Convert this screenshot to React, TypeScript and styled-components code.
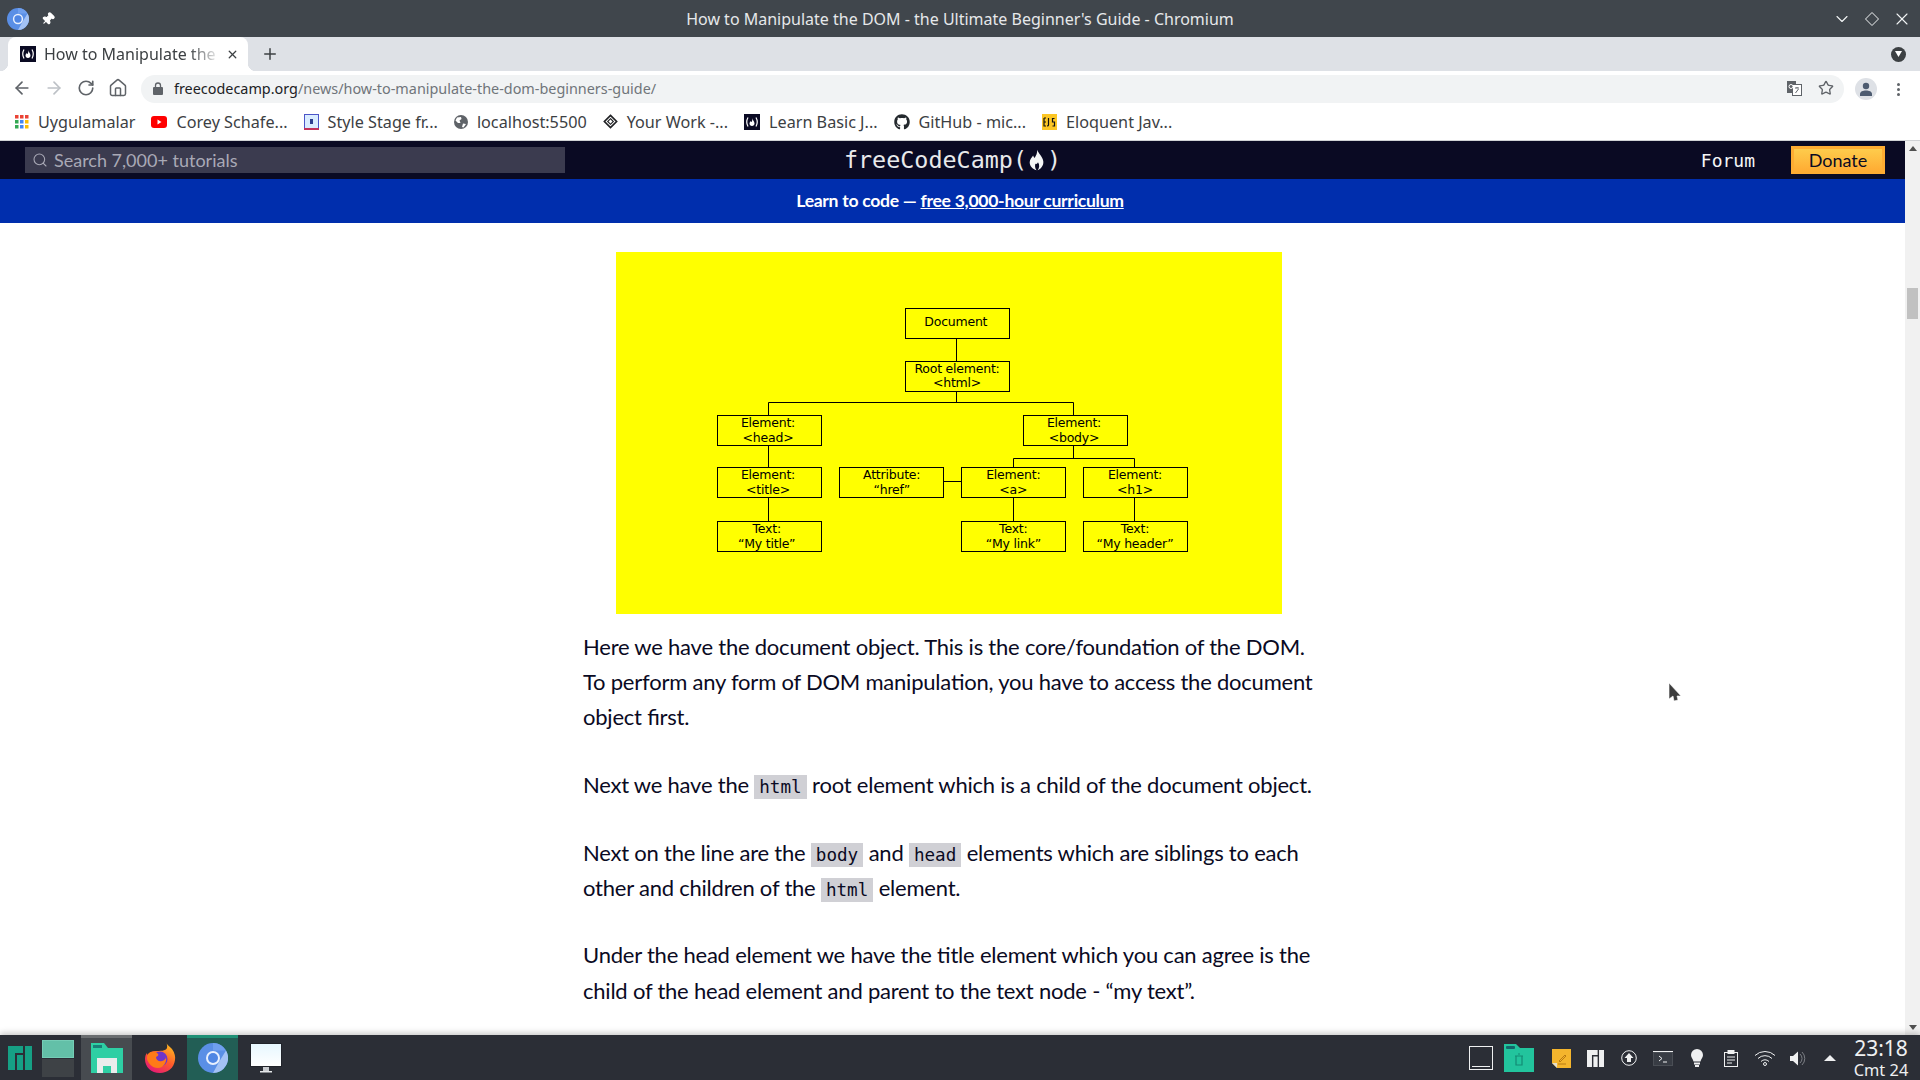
import styled, { createGlobalStyle } from "styled-components";
import { ArrowLeft, ArrowRight, ChevronDown, Home, Pin, Plus, RotateCw, Search, Star, X } from "lucide-react";
import { FaGithub } from "react-icons/fa";

const GlobalStyle = createGlobalStyle`
  html, body { margin: 0; height: 100%; overflow: hidden; background: #fff; }
  * { box-sizing: border-box; }
`;

const Screen = styled.div`
  height: 100vh;
  display: flex;
  flex-direction: column;
  font-family: "Noto Sans", sans-serif;
  position: relative;
`;

/* window title */
const TitleBar = styled.div`
  height: 37px;
  flex: none;
  background: #40464c;
  display: grid;
  grid-template-columns: 1fr auto 1fr;
  align-items: center;
  color: #e6e8ea;
  font-size: 16px;
`;
const TitleLeft = styled.div`
  display: flex;
  align-items: center;
  gap: 12px;
  padding-left: 7px;
`;
const TitleRight = styled.div`
  display: flex;
  justify-content: flex-end;
  align-items: center;
  gap: 10px;
  padding-right: 8px;
  color: #f2f4f5;
`;

/* tabs */
const TabStrip = styled.div`
  height: 34px;
  flex: none;
  background: #dee1e6;
  display: flex;
  align-items: center;
  padding-left: 8px;
  padding-right: 14px;
`;
const Tab = styled.div`
  position: relative;
  width: 240px;
  height: 34px;
  background: #fff;
  border-radius: 8px 8px 0 0;
  display: flex;
  align-items: center;
  padding: 0 12px;
  color: #3c4043;
  font-size: 16px;
  &::before, &::after {
    content: "";
    position: absolute;
    bottom: 0;
    width: 8px;
    height: 8px;
  }
  &::before { left: -8px; background: radial-gradient(circle at 0 0, #dee1e6 8px, #fff 8.5px); }
  &::after { right: -8px; background: radial-gradient(circle at 100% 0, #dee1e6 8px, #fff 8.5px); }
`;
const TabLabel = styled.span`
  margin-left: 8px;
  white-space: nowrap;
  -webkit-mask-image: linear-gradient(to right, #000 84%, rgba(0, 0, 0, 0.15) 100%);
  mask-image: linear-gradient(to right, #000 84%, rgba(0, 0, 0, 0.15) 100%);
`;
const TabClose = styled.div`
  margin-left: auto;
  margin-right: -3px;
  display: flex;
`;
const NewTab = styled.div`
  margin-left: 13px;
  display: flex;
  color: #3c4043;
`;
const TabMenu = styled.div`
  margin-left: auto;
  width: 15px;
  height: 15px;
  border-radius: 50%;
  background: #3c4043;
  display: flex;
  align-items: center;
  justify-content: center;
`;

/* address bar */
const Toolbar = styled.div`
  height: 32px;
  flex: none;
  background: #fff;
  display: flex;
  align-items: flex-end;
  padding-left: 6px;
`;
const NavButton = styled.div<{ $off?: boolean }>`
  width: 32px;
  height: 28px;
  padding-bottom: 2px;
  display: flex;
  align-items: center;
  justify-content: center;
  color: ${props => (props.$off ? "#bdc1c6" : "#5f6368")};
`;
const Omnibox = styled.div`
  width: 1703px;
  height: 28px;
  margin-left: 7px;
  padding: 0 10px 2px 12px;
  border-radius: 14px;
  background: #f1f3f4;
  display: flex;
  align-items: center;
  font-size: 14.4px;
  color: #70757a;
  gap: 11px;
`;
const Host = styled.span`
  color: #202124;
`;
const OmniRight = styled.div`
  margin-left: auto;
  display: flex;
  align-items: center;
  gap: 16px;
  color: #5f6368;
`;
const Avatar = styled.div`
  width: 22px;
  height: 22px;
  margin: 0 0 3px 11px;
  border-radius: 50%;
  background: #dee1e6;
  display: flex;
  align-items: center;
  justify-content: center;
`;
const Kebab = styled.div`
  margin: 0 0 7px 20px;
  display: flex;
  flex-direction: column;
  gap: 2px;
  i { width: 3px; height: 3px; border-radius: 50%; background: #5f6368; display: block; }
`;

/* bookmarks */
const BookmarkBar = styled.div`
  height: 38px;
  flex: none;
  background: #fff;
  border-bottom: 1px solid #d0d2d5;
  display: flex;
  align-items: center;
  padding-left: 15px;
  gap: 16px;
`;
const Bookmark = styled.div`
  display: flex;
  align-items: center;
  gap: 9px;
  font-size: 16.2px;
  color: #3c4043;
  white-space: nowrap;
`;

/* browser viewport */
const Viewport = styled.div`
  flex: 1;
  min-height: 0;
  display: flex;
  overflow: hidden;
`;
const Page = styled.div`
  flex: 1;
  min-width: 0;
  overflow: hidden;
  font-family: Lato, sans-serif;
  color: #0a0a23;
`;
const ScrollTrack = styled.div`
  width: 15px;
  flex: none;
  background: #f1f1f1;
  display: flex;
  flex-direction: column;
  align-items: center;
  justify-content: space-between;
  padding: 5px 0;
  position: relative;
`;
const ScrollThumb = styled.div`
  position: absolute;
  top: 147px;
  left: 2px;
  width: 11px;
  height: 31px;
  background: #c1c1c1;
`;
const ScrollArrow = styled.div<{ $down?: boolean }>`
  width: 0;
  height: 0;
  border-left: 4px solid transparent;
  border-right: 4px solid transparent;
  ${props => (props.$down ? "border-top: 5px solid #505050;" : "border-bottom: 5px solid #505050;")}
`;

const SiteHeader = styled.header`
  height: 38px;
  background: #0a0a23;
  display: grid;
  grid-template-columns: 1fr auto 1fr;
  align-items: center;
  color: #f5f6f7;
`;
const SearchBox = styled.div`
  margin-left: 25px;
  width: 540px;
  height: 26px;
  background: #3b3b4f;
  display: flex;
  align-items: center;
  gap: 6px;
  padding-left: 7px;
  color: #a9a9b6;
  font-size: 18px;
`;
const Logo = styled.div`
  display: flex;
  align-items: center;
  gap: 1.5px;
  font-family: "DejaVu Sans Mono", monospace;
  font-size: 23.4px;
  color: #e8e9eb;
`;
const HeaderRight = styled.div`
  display: flex;
  justify-content: flex-end;
  align-items: center;
  gap: 36px;
  padding-right: 20px;
`;
const ForumLink = styled.span`
  font-family: "DejaVu Sans Mono", monospace;
  font-size: 18px;
`;
const Donate = styled.span`
  width: 94px;
  height: 28px;
  border: 3px solid #feac32;
  background: linear-gradient(#fecc4c, #ffac33);
  color: #0a0a23;
  font-size: 18px;
  display: flex;
  align-items: center;
  justify-content: center;
`;
const Banner = styled.div`
  height: 44px;
  padding: 0 0 2px 15px;
  background: #002ead;
  color: #fff;
  font-weight: 700;
  font-size: 17.6px;
  letter-spacing: -0.3px;
  display: flex;
  align-items: center;
  justify-content: center;
  gap: 4px;
  a { color: inherit; text-decoration: underline; }
`;

const Article = styled.article`
  width: 740px;
  margin: 29px 0 0 583px;
  font-size: 22px;
  line-height: 35.2px;
  letter-spacing: -0.22px;
  font-feature-settings: "liga" 1;
  white-space: nowrap;
`;
const Paragraph = styled.p`
  margin: 0 0 32.4px;
`;
const Code = styled.code`
  font-family: "DejaVu Sans Mono", monospace;
  font-size: 17.6px;
  line-height: 1;
  letter-spacing: 0;
  background: #d0d0d5;
  padding: 2px 5px;
`;
const Figure = styled.figure`
  margin: 0 0 15px 33px;
  width: 666px;
  height: 362px;
  background: #ffff00;
  svg { display: block; }
`;

/* KDE panel */
const Taskbar = styled.div`
  position: relative;
  height: 45px;
  flex: none;
  background: #2b2e36;
  box-shadow: 0 -2px 6px rgba(0, 0, 0, 0.22);
  display: flex;
  align-items: stretch;
`;
const TaskSlot = styled.div<{ $w: number; $bg?: string; $bar?: string }>`
  width: ${props => props.$w}px;
  flex: none;
  padding-bottom: 2px;
  display: flex;
  align-items: center;
  justify-content: center;
  background: ${props => props.$bg || "transparent"};
  border-top: 3px solid ${props => props.$bar || "transparent"};
`;
const Pager = styled.div`
  width: 32px;
  height: 37px;
  display: flex;
  flex-direction: column;
  gap: 1px;
  margin: 0 0 0 -5px;
`;
const PagerDesk = styled.div<{ $active?: boolean }>`
  flex: 1;
  background: ${props => (props.$active ? "#63c0a8" : "#3e4246")};
  border: 1px solid ${props => (props.$active ? "#75cdb6" : "#3e4246")};
`;
const Tray = styled.div`
  margin-left: auto;
  display: flex;
  align-items: stretch;
`;
const Clock = styled.div`
  width: 67px;
  padding-right: 11px;
  color: #eff0f1;
  display: flex;
  flex-direction: column;
  align-items: center;
  justify-content: center;
  line-height: 20px;
  font-size: 16.4px;
  white-space: nowrap;
  b { font-weight: 400; font-size: 21px; line-height: 24px; }
`;
const Cursor = styled.svg`
  position: absolute;
  left: 1668px;
  top: 682px;
`;

const Chromium = ({ size }: { size: number }) => (
  <svg width={size} height={size} viewBox="0 0 30 30">
    <circle cx="15" cy="15" r="15" fill="#5a8fe6" />
    <path d="M15 0a15 15 0 0 1 13 7.500H15z" fill="#6f9fee" />
    <path d="M28 7.500A15 15 0 0 1 15 30l6-11z" fill="#a3c2f5" />
    <circle cx="15" cy="15" r="7" fill="#e8f0fe" />
    <circle cx="15" cy="15" r="5" fill="#4f86e4" />
  </svg>
);

const FccMark = () => (
  <svg width="16" height="16" viewBox="0 0 16 16">
    <rect width="16" height="16" fill="#0a0a23" />
    <path d="M4 3.500Q1.500 8 4 12.500M12 3.500Q14.500 8 12 12.500" stroke="#fff" strokeWidth="1.200" fill="none" />
    <path d="M8.200 4C8.500 6 10.500 7.500 10.500 9.500C10.500 11 9.500 12 8 12C6.500 12 5.500 11 5.500 9.500C5.500 8.500 6.300 7.800 6.800 7C7 7.800 7.300 8 7.500 8C8.200 7 8.500 5.500 8.200 4Z" fill="#fff" />
  </svg>
);

const AppsGrid = () => {
  const colors = ["#ea4335", "#ea4335", "#ea4335", "#34a853", "#4285f4", "#fbbc04", "#34a853", "#4285f4", "#fbbc04"];
  return (
    <svg width="14" height="14" viewBox="0 0 14 14">
      {colors.map((c, i) => (
        <rect key={i} x={(i % 3) * 5} y={Math.floor(i / 3) * 5} width="3.500" height="3.500" fill={c} />
      ))}
    </svg>
  );
};

const Youtube = () => (
  <svg width="16" height="12" viewBox="0 0 16 12">
    <rect width="16" height="12" rx="3" fill="#f00" />
    <path d="M6.500 3.500v5l4-2.500z" fill="#fff" />
  </svg>
);

const StyleStage = () => (
  <svg width="15" height="16" viewBox="0 0 15 16">
    <rect x="0.500" y="0.500" width="14" height="15" fill="#d9ecff" stroke="#4b55c8" />
    <rect x="0" y="14" width="15" height="2" fill="#c2325a" />
    <rect x="6" y="5" width="3" height="5" fill="#2c3e8f" />
  </svg>
);

const GlobeFill = () => (
  <svg width="14" height="14" viewBox="0 0 14 14">
    <circle cx="7" cy="7" r="7" fill="#5f6368" />
    <path d="M3 2.500 7 2l.5 2-2 1.500L6.500 8 4 8 1.500 5.500zM9 8.500l3 .5-2.500 3.500-1.500-.500z" fill="#fff" />
  </svg>
);

const CodepenMark = () => (
  <svg width="15" height="15" viewBox="0 0 16 16" fill="none" stroke="#202124" strokeWidth="1.800">
    <path d="M8 1.500 14.500 8 8 14.500 1.500 8z" />
    <path d="M8 5 11 8 8 11 5 8z" strokeWidth="1.200" />
  </svg>
);

const EjsMark = () => (
  <svg width="15" height="16" viewBox="0 0 15 16">
    <rect width="15" height="16" fill="#fcc624" />
    <path d="M2 4v8h2M2 4h2M2 8h2M6.500 4v7q0 1-1.500 1M12.500 4.500h-2v3.500h2v4h-2" stroke="#111" strokeWidth="1.200" fill="none" />
  </svg>
);

const Flame = () => (
  <svg width="17" height="22" viewBox="0 0 15 18" fill="#f5f6f7">
    <path d="M8 0C9 3 13 6 13.500 10C14 14 11 17 8.500 18C10 16 10.500 13.500 8.800 11C8.200 12.500 7 13 6.600 12C6 13.500 6 16 7.500 18C4 17 1.500 14.500 1.500 11C1.500 8.500 3.500 6.500 4.500 5C5 6.500 5.500 7 6 7C7 5 8.500 3 8 0Z" />
  </svg>
);

const Manjaro = ({ color, size }: { color: string; size: number }) => (
  <svg width={size} height={size} viewBox="0 0 24 24" fill={color}>
    <path d="M0 0h15v7H7v17H0zM9 9h6v15H9zM17 0h7v24h-7z" />
  </svg>
);

const FolderHome = () => (
  <svg width="32" height="32" viewBox="0 0 32 32">
    <path d="M0 1h13l4 5h15v25H0z" fill="#2ecfa4" />
    <rect x="2" y="3" width="9" height="3" fill="#1a7f78" />
    <path d="M6 31V16h20v15h-6v-7h-8v7z" fill="#e9ecec" />
  </svg>
);

const FirefoxMark = () => (
  <svg width="32" height="32" viewBox="0 0 32 32">
    <defs>
      <linearGradient id="ff" x1="0.800" y1="0" x2="0.200" y2="1">
        <stop offset="0" stopColor="#ffc31f" />
        <stop offset="0.500" stopColor="#ff5a2b" />
        <stop offset="1" stopColor="#e3147c" />
      </linearGradient>
    </defs>
    <path d="M22 0c1 3 3 4 6 7 3 4 3.500 8 3 11-1 8-7.500 13-15 13C7 31 1 25 1 17c0-3 1-5 2-6 0 1 .5 2 1 2 1-3 4-4 7-4 5 0 11 0 12-3 .5-2 0-4-1-6z" fill="url(#ff)" />
    <circle cx="16" cy="17" r="7.500" fill="#6f35c9" />
    <path d="M4 12c3-3 8-3 10 0 1 1 0 2-2 3 0 3 3 5 6 4 2-.5 4-2 4-4 1 6-3 11-8 11-6 0-10-5-11-9 0-2 0-3 1-5z" fill="#ff7a18" />
  </svg>
);

const Monitor = () => (
  <svg width="32" height="30" viewBox="0 0 32 30">
    <defs>
      <linearGradient id="scr" x1="0" y1="0" x2="0" y2="1">
        <stop offset="0" stopColor="#e6f7ff" />
        <stop offset="1" stopColor="#ffffff" />
      </linearGradient>
    </defs>
    <rect x="0.500" y="0.500" width="31" height="23" fill="url(#scr)" stroke="#20232a" />
    <rect x="13" y="24" width="6" height="4" fill="#c8cbcf" />
    <rect x="10" y="28" width="12" height="1.500" fill="#e5e7e9" />
  </svg>
);

const TrashFolder = () => (
  <svg width="30" height="28" viewBox="0 0 30 28">
    <path d="M0 0h12l4 4h14v24H0z" fill="#22c49d" />
    <rect x="2" y="2" width="9" height="3" rx="1" fill="#14666a" />
    <path d="M11 12h8M12 12v9h6v-9M14 10h2" stroke="#138a74" strokeWidth="1.200" fill="none" />
  </svg>
);

const Notes = () => (
  <svg width="19" height="19" viewBox="0 0 19 19">
    <path d="M0 0h19v19H5l-5-5z" fill="#f4b52d" />
    <path d="M0 14h5v5z" fill="#e8e0c8" />
    <path d="M7 12l6-6 1 1-6 6zM6 15h8" stroke="#b97a12" fill="none" />
  </svg>
);

const Upload = () => (
  <svg width="16" height="16" viewBox="0 0 16 16">
    <circle cx="8" cy="8" r="7.300" fill="none" stroke="#eff0f1" />
    <path d="M8 3l4.500 5H10v4H6V8H3.500z" fill="#eff0f1" />
  </svg>
);

const Terminal = () => (
  <svg width="20" height="15" viewBox="0 0 20 15" fill="none" stroke="#eff0f1">
    <rect y="0" width="20" height="1" fill="#eff0f1" stroke="none" />
    <rect x="0.500" y="1.500" width="19" height="13" fill="#383c44" stroke="#4a4e55" />
    <path d="M6 5l3 2.500L6 10M10 11h4" />
  </svg>
);

const Bulb = () => (
  <svg width="12" height="18" viewBox="0 0 12 18" fill="#eff0f1">
    <path d="M6 0a6 6 0 0 1 6 6c0 2.500-2 4-2.500 6.500h-7C2 10 0 8.500 0 6a6 6 0 0 1 6-6z" />
    <rect x="3" y="13.500" width="6" height="2" />
    <rect x="4" y="16" width="4" height="2" />
  </svg>
);

const Clipboard = () => (
  <svg width="14" height="17" viewBox="0 0 14 17" fill="none" stroke="#eff0f1">
    <rect x="0.500" y="2.500" width="13" height="14" />
    <rect x="3.500" y="0" width="7" height="4" fill="#eff0f1" stroke="none" />
    <path d="M3 7h8M3 10h8M3 13h5" />
  </svg>
);

const Wifi = () => (
  <svg width="22" height="16" viewBox="0 0 22 16" fill="none" stroke="#eff0f1">
    <path d="M1 5.500a14.500 14.500 0 0 1 20 0M4 8.500a10 10 0 0 1 14 0M7 11.500a5.500 5.500 0 0 1 8 0" />
    <circle cx="11" cy="14" r="1.500" />
  </svg>
);

const Speaker = () => (
  <svg width="17" height="15" viewBox="0 0 17 15">
    <path d="M0 5h3l5-4.500v14L3 10H0z" fill="#eff0f1" />
    <path d="M10 3a6 6 0 0 1 0 9M12 1a9 9 0 0 1 0 13" fill="none" stroke="#7c7f85" />
  </svg>
);

const TrayUp = () => (
  <svg width="12" height="6" viewBox="0 0 12 6">
    <path d="M6 0l6 6H0z" fill="#eff0f1" />
  </svg>
);

type BoxProps = { x: number; y: number; cx: number; lines: [string, string?]; b1: number; b2?: number };

const boxes: BoxProps[] = [
  { x: 289.5, y: 56.5, cx: 339.8, lines: ["Document"], b1: 74 },
  { x: 289.5, y: 109.5, cx: 341, lines: ["Root element:", "<html>"], b1: 121, b2: 135 },
  { x: 101.5, y: 163.5, cx: 152, lines: ["Element:", "<head>"], b1: 175, b2: 190 },
  { x: 407.5, y: 163.5, cx: 458, lines: ["Element:", "<body>"], b1: 175, b2: 190 },
  { x: 101.5, y: 215.5, cx: 152, lines: ["Element:", "<title>"], b1: 227, b2: 242 },
  { x: 223.5, y: 215.5, cx: 275.7, lines: ["Attribute:", "\u201Chref\u201D"], b1: 227, b2: 242 },
  { x: 345.5, y: 215.5, cx: 397.3, lines: ["Element:", "<a>"], b1: 227, b2: 242 },
  { x: 467.5, y: 215.5, cx: 519, lines: ["Element:", "<h1>"], b1: 227, b2: 242 },
  { x: 101.5, y: 269.5, cx: 150.7, lines: ["Text:", "\u201CMy title\u201D"], b1: 281, b2: 296 },
  { x: 345.5, y: 269.5, cx: 397.3, lines: ["Text:", "\u201CMy link\u201D"], b1: 281, b2: 296 },
  { x: 467.5, y: 269.5, cx: 519, lines: ["Text:", "\u201CMy header\u201D"], b1: 281, b2: 296 },
];

const connectors =
  "M340.5 86v24M340.5 140v10.500M152.500 150.500H457.500M152.500 150.500V164M457.500 150.500V164" +
  "M152.500 193v23M152.500 245v25M457.500 193v13.500M397.500 206.500H518.500M397.500 206.500V216M518.500 206.500V216" +
  "M327.500 229.500H346M397.500 245v25M518.500 245v25";

const DomTree = () => (
  <svg width="666" height="361" viewBox="0 0 666 361" fontFamily="'DejaVu Sans', sans-serif" fontSize="12.500">
    <path d={connectors} stroke="#000" fill="none" />
    {boxes.map(b => (
      <g key={b.lines.join()}>
        <rect x={b.x} y={b.y} width="104" height="30" fill="none" stroke="#000" />
        <text x={b.cx} y={b.b1} textAnchor="middle">{b.lines[0]}</text>
        {b.lines[1] && <text x={b.cx} y={b.b2} textAnchor="middle">{b.lines[1]}</text>}
      </g>
    ))}
  </svg>
);

const App = () => (
  <Screen>
    <GlobalStyle />
    <TitleBar>
      <TitleLeft>
        <Chromium size={22} />
        <Pin size={14} color="#fff" fill="#fff" style={{ transform: "rotate(45deg)" }} />
      </TitleLeft>
      <span>How to Manipulate the DOM - the Ultimate Beginner's Guide - Chromium</span>
      <TitleRight>
        <ChevronDown size={20} strokeWidth={1.3} />
        <svg width="20" height="20" viewBox="0 0 20 20" fill="none" stroke="currentColor">
          <path d="M10 3.500 16.500 10 10 16.500 3.500 10z" />
        </svg>
        <X size={20} strokeWidth={1.3} />
      </TitleRight>
    </TitleBar>

    <TabStrip>
      <Tab>
        <FccMark />
        <TabLabel>How to Manipulate the</TabLabel>
        <TabClose><X size={13} strokeWidth={2.4} /></TabClose>
      </Tab>
      <NewTab><Plus size={18} strokeWidth={2} /></NewTab>
      <TabMenu>
        <svg width="7" height="6" viewBox="0 0 7 6"><path d="M0 0h7L3.500 6z" fill="#fff" /></svg>
      </TabMenu>
    </TabStrip>

    <Toolbar>
      <NavButton><ArrowLeft size={20} strokeWidth={2} /></NavButton>
      <NavButton $off><ArrowRight size={20} strokeWidth={2} /></NavButton>
      <NavButton><RotateCw size={18} strokeWidth={2.2} /></NavButton>
      <NavButton><Home size={20} strokeWidth={1.8} /></NavButton>
      <Omnibox>
        <svg width="10" height="13" viewBox="0 0 10 13">
          <rect y="5" width="10" height="8" rx="1" fill="#5f6368" />
          <path d="M2.500 5.500V3.500a2.500 2.500 0 0 1 5 0v2" fill="none" stroke="#5f6368" strokeWidth="1.300" />
        </svg>
        <span><Host>freecodecamp.org</Host>/news/how-to-manipulate-the-dom-beginners-guide/</span>
        <OmniRight>
          <svg width="15" height="15" viewBox="0 0 15 15">
            <rect x="0" y="0" width="9" height="12" fill="#5f6368" />
            <rect x="5.500" y="3.500" width="9" height="11" fill="#fff" stroke="#5f6368" />
            <path d="M8 7h4M10 6v1M8.500 12l3-4" stroke="#5f6368" fill="none" />
            <circle cx="4" cy="5.500" r="2" fill="none" stroke="#fff" />
          </svg>
          <Star size={16} strokeWidth={2} />
        </OmniRight>
      </Omnibox>
      <Avatar>
        <svg width="14" height="14" viewBox="0 0 14 14" fill="#4d5b70">
          <circle cx="7" cy="4" r="3.200" />
          <path d="M1 14v-2c0-2.500 3-3.500 6-3.500s6 1 6 3.500v2z" />
        </svg>
      </Avatar>
      <Kebab><i /><i /><i /></Kebab>
    </Toolbar>

    <BookmarkBar>
      <Bookmark><AppsGrid />Uygulamalar</Bookmark>
      <Bookmark><Youtube />Corey Schafe...</Bookmark>
      <Bookmark><StyleStage />Style Stage fr...</Bookmark>
      <Bookmark><GlobeFill />localhost:5500</Bookmark>
      <Bookmark><CodepenMark />Your Work -...</Bookmark>
      <Bookmark><FccMark />Learn Basic J...</Bookmark>
      <Bookmark><FaGithub size={16} color="#24292e" />GitHub - mic...</Bookmark>
      <Bookmark><EjsMark />Eloquent Jav...</Bookmark>
    </BookmarkBar>

    <Viewport>
      <Page>
        <SiteHeader>
          <SearchBox><Search size={16} strokeWidth={1.6} />Search 7,000+ tutorials</SearchBox>
          <Logo>freeCodeCamp(<Flame />)</Logo>
          <HeaderRight>
            <ForumLink>Forum</ForumLink>
            <Donate>Donate</Donate>
          </HeaderRight>
        </SiteHeader>
        <Banner>Learn to code — <a>free 3,000-hour curriculum</a></Banner>
        <Article>
          <Figure><DomTree /></Figure>
          <Paragraph>
            Here we have the document object. This is the core/foundation of the DOM.<br />
            To perform any form of DOM manipulation, you have to access the document<br />
            object first.
          </Paragraph>
          <Paragraph>Next we have the <Code>html</Code> root element which is a child of the document object.</Paragraph>
          <Paragraph>
            Next on the line are the <Code>body</Code> and <Code>head</Code> elements which are siblings to each<br />
            other and children of the <Code>html</Code> element.
          </Paragraph>
          <Paragraph>
            Under the head element we have the title element which you can agree is the<br />
            child of the head element and parent to the text node - “my text”.
          </Paragraph>
        </Article>
      </Page>
      <ScrollTrack>
        <ScrollArrow />
        <ScrollThumb />
        <ScrollArrow $down />
      </ScrollTrack>
    </Viewport>

    <Taskbar>
      <TaskSlot $w={40}><Manjaro color="#16a085" size={24} /></TaskSlot>
      <TaskSlot $w={41}><Pager><PagerDesk $active /><PagerDesk /></Pager></TaskSlot>
      <TaskSlot $w={51} $bg="#474b50" $bar="#6a6d70"><FolderHome /></TaskSlot>
      <TaskSlot $w={55}><FirefoxMark /></TaskSlot>
      <TaskSlot $w={51} $bg="#225e55" $bar="#1f9076"><Chromium size={30} /></TaskSlot>
      <TaskSlot $w={55}><Monitor /></TaskSlot>
      <Tray>
        <TaskSlot $w={40}>
          <svg width="24" height="24" viewBox="0 0 24 24" fill="none" stroke="#eff0f1">
            <rect x="0.500" y="0.500" width="23" height="23" />
            <path d="M3 20.500h18" />
          </svg>
        </TaskSlot>
        <TaskSlot $w={36}><TrashFolder /></TaskSlot>
        <TaskSlot $w={48}><Notes /></TaskSlot>
        <TaskSlot $w={20}><Manjaro color="#eff0f1" size={17} /></TaskSlot>
        <TaskSlot $w={48}><Upload /></TaskSlot>
        <TaskSlot $w={20}><Terminal /></TaskSlot>
        <TaskSlot $w={48}><Bulb /></TaskSlot>
        <TaskSlot $w={20}><Clipboard /></TaskSlot>
        <TaskSlot $w={48}><Wifi /></TaskSlot>
        <TaskSlot $w={18}><Speaker /></TaskSlot>
        <TaskSlot $w={46}><TrayUp /></TaskSlot>
        <Clock><b>23:18</b>Cmt 24</Clock>
      </Tray>
    </Taskbar>

    <Cursor width="14" height="22" viewBox="0 0 14 22">
      <path d="M1 1v16l4-3 1 5 4-1-1-4 4 0z" fill="#3c3c3c" stroke="#fff" strokeWidth="0.600" />
    </Cursor>
  </Screen>
);

export default App;
